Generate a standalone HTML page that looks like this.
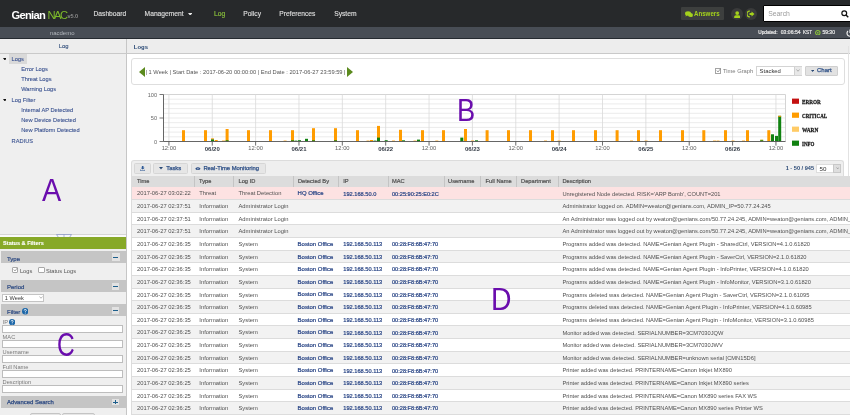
<!DOCTYPE html>
<html><head><meta charset="utf-8"><style>
html,body{margin:0;padding:0;}
body{width:850px;height:415px;overflow:hidden;position:relative;background:#fff;font-family:'Liberation Sans', sans-serif;}
.t{position:absolute;white-space:nowrap;line-height:1;}
.r{position:absolute;}

</style></head><body>
<div id="wrap" style="position:absolute;left:0;top:0;width:850px;height:415px;overflow:hidden;will-change:transform;background:#fff">
<div class="r" style="left:0.00px;top:0.00px;width:850.00px;height:26.50px;background:#27292b;"></div>
<div class="t" style="left:11.60px;top:9.82px;font-size:11.2px;color:#fff;font-weight:bold;letter-spacing:-0.75px">Genian</div>
<div class="t" style="left:47.60px;top:9.82px;font-size:11.2px;color:#7dbb2a;font-weight:normal;letter-spacing:-1.6px">NAC</div>
<div class="t" style="left:67.60px;top:13.86px;font-size:5.6px;color:#8a8a8a;font-weight:bold;letter-spacing:-0.1px">v5.0</div>
<div class="t" style="left:93.50px;top:11.33px;font-size:6.7px;color:#dcdcdc;font-weight:normal;-webkit-text-stroke:0.15px #dcdcdc">Dashboard</div>
<div class="t" style="left:144.60px;top:11.33px;font-size:6.7px;color:#dcdcdc;font-weight:normal;-webkit-text-stroke:0.15px #dcdcdc">Management</div>
<div class="t" style="left:214.00px;top:11.33px;font-size:6.7px;color:#8cc43c;font-weight:normal;-webkit-text-stroke:0.15px #8cc43c">Log</div>
<div class="t" style="left:243.20px;top:11.33px;font-size:6.7px;color:#dcdcdc;font-weight:normal;-webkit-text-stroke:0.15px #dcdcdc">Policy</div>
<div class="t" style="left:279.30px;top:11.33px;font-size:6.7px;color:#dcdcdc;font-weight:normal;-webkit-text-stroke:0.15px #dcdcdc">Preferences</div>
<div class="t" style="left:334.20px;top:11.33px;font-size:6.7px;color:#dcdcdc;font-weight:normal;-webkit-text-stroke:0.15px #dcdcdc">System</div>
<svg class="r" style="left:188.1px;top:12.7px" width="4.4" height="2.8" viewBox="0 0 8 5"><path d="M0 0 H8 L4 5 Z" fill="#e8e8e8"/></svg>
<div class="r" style="left:681.10px;top:6.80px;width:42.80px;height:13.20px;background:#3d3f3e;border-radius:1px"></div>
<svg class="r" style="left:685px;top:10.5px" width="8" height="6.5" viewBox="0 0 16 13"><ellipse cx="6" cy="5" rx="6" ry="4.5" fill="#a4d21c"/><path d="M2 8 L1 11 L5 9 Z" fill="#a4d21c"/><ellipse cx="11" cy="8" rx="5" ry="3.8" fill="#a4d21c"/><path d="M14 10 L15.5 13 L11.5 11.5 Z" fill="#a4d21c"/></svg>
<div class="t" style="left:693.50px;top:9.97px;font-size:7.6px;color:#a4d21c;font-weight:bold;transform:scaleX(0.81);transform-origin:0 0">Answers</div>
<div class="r" style="left:731.10px;top:7.80px;width:12.00px;height:12.20px;background:#3a3b3b;border-radius:50%"></div>
<svg class="r" style="left:733.8px;top:10.8px" width="6.4" height="7.2" viewBox="0 0 14 16"><circle cx="7" cy="4.6" r="4.2" fill="#a4d21c"/><path d="M0.3 16 V13 Q0.3 9.2 4 9.2 H10 Q13.7 9.2 13.7 13 V16 Z" fill="#a4d21c"/></svg>
<div class="r" style="left:745.10px;top:7.80px;width:12.00px;height:12.20px;background:#3a3b3b;border-radius:50%"></div>
<svg class="r" style="left:747.3px;top:9.8px" width="8" height="8" viewBox="0 0 16 16"><path d="M6 2 A6 6 0 1 0 6 14" stroke="#a4d21c" stroke-width="2.2" fill="none"/><path d="M5 6 H9 V3 L15 8 L9 13 V10 H5 Z" fill="#a4d21c"/></svg>
<div class="r" style="left:762.60px;top:4.50px;width:92.00px;height:17.80px;background:#fff;border:1.1px solid #000;border-radius:1px;box-sizing:border-box"></div>
<div class="t" style="left:768.20px;top:10.70px;font-size:6.85px;color:#9a9a9a;font-weight:normal;">Search</div>
<svg class="r" style="left:841px;top:9.5px" width="8" height="8" viewBox="0 0 16 16"><circle cx="6.5" cy="6.5" r="4.8" stroke="#111" stroke-width="2.4" fill="none"/><path d="M10 10 L14.5 14.5" stroke="#111" stroke-width="2.8"/></svg>
<div class="r" style="left:0.00px;top:26.50px;width:850.00px;height:11.50px;background:#484d55;"></div>
<div class="r" style="left:0.00px;top:37.50px;width:850.00px;height:1.00px;background:#252a30;"></div>
<div class="t" style="left:49.80px;top:29.72px;font-size:6.0px;color:#b3b8bd;font-weight:normal;">nacdemo</div>
<div class="t" style="left:758.20px;top:30.65px;font-size:4.78px;color:#e4e4e4;font-weight:normal;-webkit-text-stroke:0.22px #e4e4e4">Updated:</div>
<div class="t" style="left:780.80px;top:30.39px;font-size:5.09px;color:#e4e4e4;font-weight:normal;-webkit-text-stroke:0.22px #e4e4e4">03:06:54</div>
<div class="t" style="left:803.00px;top:30.81px;font-size:4.6px;color:#e4e4e4;font-weight:normal;-webkit-text-stroke:0.22px #e4e4e4">KST</div>
<svg class="r" style="left:815px;top:29.5px" width="5.6" height="5.6" viewBox="0 0 10 10"><circle cx="5" cy="5" r="4" stroke="#8cc43c" stroke-width="1.8" fill="none"/><circle cx="5" cy="5" r="1.5" fill="#8cc43c"/></svg>
<div class="t" style="left:822.40px;top:30.44px;font-size:5.03px;color:#e4e4e4;font-weight:normal;-webkit-text-stroke:0.22px #e4e4e4">59:30</div>
<svg class="r" style="left:845.5px;top:28.8px" width="8" height="8" viewBox="0 0 16 16"><path d="M4 4 A6 6 0 1 0 12 4" stroke="#f0f0f0" stroke-width="2.4" fill="none"/><path d="M8 1 V8" stroke="#f0f0f0" stroke-width="2.4"/></svg>
<div class="r" style="left:0.00px;top:38.50px;width:126.00px;height:376.50px;background:#efefef;"></div>
<div class="r" style="left:126.00px;top:38.50px;width:1.00px;height:376.50px;background:#c6c6c6;"></div>
<div class="r" style="left:0.00px;top:38.50px;width:126.00px;height:14.50px;background:#ededed;"></div>
<div class="r" style="left:0.00px;top:53.40px;width:850.00px;height:1.00px;background:#c9c9c9;"></div>
<div class="t" style="left:58.80px;top:43.91px;font-size:5.9px;color:#2c4a78;font-weight:normal;-webkit-text-stroke:0.08px #2c4a78">Log</div>
<div class="r" style="left:127.00px;top:38.50px;width:723.00px;height:14.50px;background:#ededed;"></div>
<div class="t" style="left:133.80px;top:45.07px;font-size:5.94px;color:#2b4a76;font-weight:bold;">Logs</div>
<div class="r" style="left:9.40px;top:54.00px;width:17.30px;height:9.70px;background:#d9d9d9;"></div>
<div class="t" style="left:11.60px;top:56.67px;font-size:5.7px;color:#3a5290;font-weight:normal;-webkit-text-stroke:0.1px #3a5290">Logs</div>
<svg class="r" style="left:2.6px;top:57.90px" width="3.8" height="2.6" viewBox="0 0 8 5.5"><path d="M0 0 H8 L4 5.5 Z" fill="#111"/></svg>
<div class="t" style="left:21.20px;top:66.77px;font-size:5.7px;color:#3a5290;font-weight:normal;-webkit-text-stroke:0.1px #3a5290">Error Logs</div>
<div class="t" style="left:21.20px;top:77.17px;font-size:5.7px;color:#3a5290;font-weight:normal;-webkit-text-stroke:0.1px #3a5290">Threat Logs</div>
<div class="t" style="left:21.20px;top:87.27px;font-size:5.7px;color:#3a5290;font-weight:normal;-webkit-text-stroke:0.1px #3a5290">Warning Logs</div>
<div class="t" style="left:11.60px;top:97.57px;font-size:5.7px;color:#3a5290;font-weight:normal;-webkit-text-stroke:0.1px #3a5290">Log Filter</div>
<svg class="r" style="left:2.6px;top:98.90px" width="3.8" height="2.6" viewBox="0 0 8 5.5"><path d="M0 0 H8 L4 5.5 Z" fill="#111"/></svg>
<div class="t" style="left:21.20px;top:107.67px;font-size:5.7px;color:#3a5290;font-weight:normal;-webkit-text-stroke:0.1px #3a5290">Internal AP Detected</div>
<div class="t" style="left:21.20px;top:118.07px;font-size:5.7px;color:#3a5290;font-weight:normal;-webkit-text-stroke:0.1px #3a5290">New Device Detected</div>
<div class="t" style="left:21.20px;top:128.17px;font-size:5.7px;color:#3a5290;font-weight:normal;-webkit-text-stroke:0.1px #3a5290">New Platform Detected</div>
<div class="t" style="left:11.60px;top:138.77px;font-size:5.7px;color:#3a5290;font-weight:normal;-webkit-text-stroke:0.1px #3a5290">RADIUS</div>
<div class="t" style="left:42.20px;top:175.30px;font-size:31px;color:#6a0dad;transform:scaleX(0.93);transform-origin:0 0">A</div>
<div class="r" style="left:0.00px;top:233.50px;width:126.00px;height:1.00px;background:#d6d6d6;"></div>
<div class="r" style="left:0.00px;top:234.50px;width:126.00px;height:2.80px;background:#fafafa;"></div>
<svg class="r" style="left:55.5px;top:233.6px" width="16" height="4" viewBox="0 0 16 4"><path d="M0.5 0.5 H15.5 L13.5 3.5 H2.5 Z" fill="#f6f7fb" stroke="#8e9ac4" stroke-width="0.8"/><path d="M8 0.5 V3.5" stroke="#8e9ac4" stroke-width="0.7"/></svg>
<div class="r" style="left:0.00px;top:237.30px;width:126.00px;height:12.20px;background:#87a928;"></div>
<div class="t" style="left:3.10px;top:241.20px;font-size:5.55px;color:#fff;font-weight:bold;-webkit-text-stroke:0.1px #fff">Status &amp; Filters</div>
<div class="r" style="left:1.20px;top:251.00px;width:124.80px;height:12.00px;background:#c5c5c5;"></div>
<div class="t" style="left:7.00px;top:255.52px;font-size:6.0px;color:#2d4a82;font-weight:normal;-webkit-text-stroke:0.2px #2d4a82">Type</div>
<div class="r" style="left:111.60px;top:253.30px;width:8.00px;height:8.00px;background:#e2e2e2;"></div>
<div class="r" style="left:113.30px;top:257.00px;width:4.60px;height:1.10px;background:#1d5f8c;"></div>
<div class="r" style="left:12.10px;top:266.80px;width:6.20px;height:6.40px;background:#fff;border:0.8px solid #a8a8a8;border-radius:1px;box-sizing:border-box"></div>
<svg class="r" style="left:12.7px;top:267.2px" width="5" height="5" viewBox="0 0 10 10"><path d="M1.5 5 L4 8 L9 1.5" stroke="#707070" stroke-width="1.2" fill="none"/></svg>
<div class="t" style="left:19.90px;top:268.57px;font-size:5.7px;color:#555;font-weight:normal;">Logs</div>
<div class="r" style="left:38.40px;top:266.80px;width:6.20px;height:6.40px;background:#fff;border:0.8px solid #a8a8a8;border-radius:1px;box-sizing:border-box"></div>
<div class="t" style="left:46.00px;top:268.57px;font-size:5.7px;color:#555;font-weight:normal;">Status Logs</div>
<div class="r" style="left:1.20px;top:280.40px;width:124.80px;height:11.50px;background:#c5c5c5;"></div>
<div class="t" style="left:7.00px;top:284.32px;font-size:6.0px;color:#2d4a82;font-weight:normal;-webkit-text-stroke:0.2px #2d4a82">Period</div>
<div class="r" style="left:111.80px;top:282.90px;width:7.20px;height:7.00px;background:#e2e2e2;"></div>
<div class="r" style="left:113.20px;top:286.00px;width:4.60px;height:1.10px;background:#1d5f8c;"></div>
<div class="r" style="left:2.10px;top:294.00px;width:41.90px;height:7.60px;background:#fff;border:0.7px solid #c4c4c4;box-sizing:border-box"></div>
<div class="t" style="left:4.80px;top:295.50px;font-size:5.67px;color:#333;font-weight:normal;">1 Week</div>
<svg class="r" style="left:38.5px;top:296px" width="4" height="3" viewBox="0 0 8 6"><path d="M1 1 L4 4.5 L7 1" stroke="#777" stroke-width="1" fill="none"/></svg>
<div class="r" style="left:1.20px;top:304.30px;width:124.80px;height:12.00px;background:#c5c5c5;"></div>
<div class="t" style="left:7.00px;top:308.52px;font-size:6.0px;color:#2d4a82;font-weight:normal;-webkit-text-stroke:0.2px #2d4a82">Filter</div>
<svg class="r" style="left:21.6px;top:308.2px" width="6.5" height="6.5" viewBox="0 0 12 12"><circle cx="6" cy="6" r="6" fill="#1b66a8"/><path d="M4 4.6 Q4 2.6 6 2.6 Q8 2.6 8 4.4 Q8 5.5 6.8 6 Q6 6.4 6 7.4" stroke="#fff" stroke-width="1.6" fill="none"/><circle cx="6" cy="9.3" r="0.95" fill="#fff"/></svg>
<div class="r" style="left:111.80px;top:307.20px;width:7.20px;height:7.00px;background:#e2e2e2;"></div>
<div class="r" style="left:113.20px;top:310.30px;width:4.60px;height:1.10px;background:#1d5f8c;"></div>
<div class="t" style="left:2.60px;top:319.57px;font-size:5.7px;color:#7a7a7a;font-weight:normal;">IP</div>
<div class="r" style="left:2.20px;top:325.30px;width:120.60px;height:7.80px;background:#fff;border:0.8px solid #bdbdbd;box-sizing:border-box"></div>
<div class="t" style="left:2.60px;top:334.57px;font-size:5.7px;color:#7a7a7a;font-weight:normal;">MAC</div>
<div class="r" style="left:2.20px;top:340.30px;width:120.60px;height:7.80px;background:#fff;border:0.8px solid #bdbdbd;box-sizing:border-box"></div>
<div class="t" style="left:2.60px;top:349.57px;font-size:5.7px;color:#7a7a7a;font-weight:normal;">Username</div>
<div class="r" style="left:2.20px;top:355.30px;width:120.60px;height:7.80px;background:#fff;border:0.8px solid #bdbdbd;box-sizing:border-box"></div>
<div class="t" style="left:2.60px;top:364.57px;font-size:5.7px;color:#7a7a7a;font-weight:normal;">Full Name</div>
<div class="r" style="left:2.20px;top:370.30px;width:120.60px;height:7.80px;background:#fff;border:0.8px solid #bdbdbd;box-sizing:border-box"></div>
<div class="t" style="left:2.60px;top:379.57px;font-size:5.7px;color:#7a7a7a;font-weight:normal;">Description</div>
<div class="r" style="left:2.20px;top:385.30px;width:120.60px;height:7.80px;background:#fff;border:0.8px solid #bdbdbd;box-sizing:border-box"></div>
<svg class="r" style="left:9.0px;top:318.7px" width="6.3" height="6.3" viewBox="0 0 12 12"><circle cx="6" cy="6" r="6" fill="#1b66a8"/><path d="M4 4.6 Q4 2.6 6 2.6 Q8 2.6 8 4.4 Q8 5.5 6.8 6 Q6 6.4 6 7.4" stroke="#fff" stroke-width="1.6" fill="none"/><circle cx="6" cy="9.3" r="0.95" fill="#fff"/></svg>
<div class="t" style="left:57.20px;top:329.30px;font-size:32.3px;color:#6a0dad;transform:scaleX(0.76);transform-origin:0 0">C</div>
<div class="r" style="left:1.20px;top:395.60px;width:124.80px;height:12.10px;background:#c5c5c5;"></div>
<div class="t" style="left:6.90px;top:400.07px;font-size:5.94px;color:#2d4a82;font-weight:normal;-webkit-text-stroke:0.25px #2d4a82">Advanced Search</div>
<div class="r" style="left:111.80px;top:398.70px;width:7.40px;height:6.80px;background:#e2e2e2;"></div>
<div class="r" style="left:113.30px;top:401.60px;width:4.60px;height:1.10px;background:#1d5f8c;"></div>
<div class="r" style="left:115.05px;top:399.80px;width:1.10px;height:4.60px;background:#1d5f8c;"></div>
<div class="r" style="left:29.80px;top:412.60px;width:31.60px;height:6.00px;background:#e6e6e6;border:0.7px solid #c4c4c4;border-radius:2px;box-sizing:border-box"></div>
<div class="r" style="left:62.30px;top:412.60px;width:33.10px;height:6.00px;background:#e6e6e6;border:0.7px solid #c4c4c4;border-radius:2px;box-sizing:border-box"></div>
<div class="r" style="left:131.20px;top:58.40px;width:713.60px;height:26.80px;background:#fff;border:0.8px solid #dedede;border-radius:3px;box-sizing:border-box"></div>
<svg class="r" style="left:139px;top:66.6px" width="6" height="10" viewBox="0 0 6 10"><path d="M6 0 L0 5 L6 10 Z" fill="#5b8a1e"/></svg>
<div class="t" style="left:145.50px;top:70.16px;font-size:5.72px;color:#555;font-weight:normal;">| 1 Week | Start Date : 2017-06-20 00:00:00 | End Date : 2017-06-27 23:59:59 |</div>
<svg class="r" style="left:346.7px;top:66.6px" width="6" height="10" viewBox="0 0 6 10"><path d="M0 0 L6 5 L0 10 Z" fill="#5b8a1e"/></svg>
<div class="r" style="left:715.20px;top:67.90px;width:5.80px;height:5.90px;background:#fff;border:0.8px solid #a4a4a4;box-sizing:border-box"></div>
<svg class="r" style="left:715.7px;top:68.2px" width="5" height="5" viewBox="0 0 10 10"><path d="M1.5 5 L4 8 L9 1.5" stroke="#666" stroke-width="1.2" fill="none"/></svg>
<div class="t" style="left:722.90px;top:69.09px;font-size:5.8px;color:#7a7a7a;font-weight:normal;">Time Graph</div>
<div class="r" style="left:756.40px;top:65.80px;width:46.10px;height:9.80px;background:#fff;border:0.7px solid #d4d4d4;box-sizing:border-box"></div>
<div class="r" style="left:794.40px;top:66.50px;width:7.60px;height:8.40px;background:#e8e8e8;border-left:0.7px solid #d0d0d0;box-sizing:border-box"></div>
<div class="t" style="left:759.60px;top:68.81px;font-size:5.9px;color:#333;font-weight:normal;">Stacked</div>
<svg class="r" style="left:796.2px;top:69.3px" width="4" height="3" viewBox="0 0 8 6"><path d="M1 1 L4 4.5 L7 1" stroke="#777" stroke-width="1" fill="none"/></svg>
<div class="r" style="left:805.30px;top:65.60px;width:32.50px;height:10.10px;background:#e2e2e2;border:0.8px solid #cfcfcf;border-radius:1px;box-sizing:border-box"></div>
<svg class="r" style="left:810.6px;top:69.6px" width="3.2" height="2.4" viewBox="0 0 8 6"><path d="M0 0 H8 L4 5 Z" fill="#2b4a76"/></svg>
<div class="t" style="left:817.00px;top:68.25px;font-size:5.97px;color:#2d4f86;font-weight:normal;-webkit-text-stroke:0.25px #2d4f86">Chart</div>
<svg class="r" style="left:0;top:0" width="850" height="170" viewBox="0 0 850 170"><line x1="163.5" y1="136.80" x2="785.5" y2="136.80" stroke="#e6e6e6" stroke-width="0.8"/><line x1="163.5" y1="132.10" x2="785.5" y2="132.10" stroke="#e6e6e6" stroke-width="0.8"/><line x1="163.5" y1="127.40" x2="785.5" y2="127.40" stroke="#e6e6e6" stroke-width="0.8"/><line x1="163.5" y1="122.70" x2="785.5" y2="122.70" stroke="#e6e6e6" stroke-width="0.8"/><line x1="163.5" y1="118.00" x2="785.5" y2="118.00" stroke="#e6e6e6" stroke-width="0.8"/><line x1="163.5" y1="113.30" x2="785.5" y2="113.30" stroke="#e6e6e6" stroke-width="0.8"/><line x1="163.5" y1="108.60" x2="785.5" y2="108.60" stroke="#e6e6e6" stroke-width="0.8"/><line x1="163.5" y1="103.90" x2="785.5" y2="103.90" stroke="#e6e6e6" stroke-width="0.8"/><line x1="163.5" y1="99.20" x2="785.5" y2="99.20" stroke="#e6e6e6" stroke-width="0.8"/><line x1="163.5" y1="94.5" x2="785.5" y2="94.5" stroke="#cfcfcf" stroke-width="0.9"/><line x1="168.90" y1="94.5" x2="168.90" y2="146.0" stroke="#d9d9d9" stroke-width="0.8"/><line x1="168.90" y1="141.5" x2="168.90" y2="145.5" stroke="#555" stroke-width="0.8"/><text x="168.90" y="150.40" font-size="5.8" font-family="Liberation Sans" font-weight="normal" fill="#5e5e5e" text-anchor="middle">12:00</text><line x1="212.26" y1="94.5" x2="212.26" y2="146.0" stroke="#d9d9d9" stroke-width="0.8"/><line x1="212.26" y1="141.5" x2="212.26" y2="145.5" stroke="#555" stroke-width="0.8"/><text x="212.26" y="150.60" font-size="6.0" font-family="Liberation Sans" font-weight="bold" fill="#353c46" text-anchor="middle">06/20</text><line x1="255.62" y1="94.5" x2="255.62" y2="146.0" stroke="#d9d9d9" stroke-width="0.8"/><line x1="255.62" y1="141.5" x2="255.62" y2="145.5" stroke="#555" stroke-width="0.8"/><text x="255.62" y="150.40" font-size="5.8" font-family="Liberation Sans" font-weight="normal" fill="#5e5e5e" text-anchor="middle">12:00</text><line x1="298.98" y1="94.5" x2="298.98" y2="146.0" stroke="#d9d9d9" stroke-width="0.8"/><line x1="298.98" y1="141.5" x2="298.98" y2="145.5" stroke="#555" stroke-width="0.8"/><text x="298.98" y="150.60" font-size="6.0" font-family="Liberation Sans" font-weight="bold" fill="#353c46" text-anchor="middle">06/21</text><line x1="342.34" y1="94.5" x2="342.34" y2="146.0" stroke="#d9d9d9" stroke-width="0.8"/><line x1="342.34" y1="141.5" x2="342.34" y2="145.5" stroke="#555" stroke-width="0.8"/><text x="342.34" y="150.40" font-size="5.8" font-family="Liberation Sans" font-weight="normal" fill="#5e5e5e" text-anchor="middle">12:00</text><line x1="385.70" y1="94.5" x2="385.70" y2="146.0" stroke="#d9d9d9" stroke-width="0.8"/><line x1="385.70" y1="141.5" x2="385.70" y2="145.5" stroke="#555" stroke-width="0.8"/><text x="385.70" y="150.60" font-size="6.0" font-family="Liberation Sans" font-weight="bold" fill="#353c46" text-anchor="middle">06/22</text><line x1="429.06" y1="94.5" x2="429.06" y2="146.0" stroke="#d9d9d9" stroke-width="0.8"/><line x1="429.06" y1="141.5" x2="429.06" y2="145.5" stroke="#555" stroke-width="0.8"/><text x="429.06" y="150.40" font-size="5.8" font-family="Liberation Sans" font-weight="normal" fill="#5e5e5e" text-anchor="middle">12:00</text><line x1="472.42" y1="94.5" x2="472.42" y2="146.0" stroke="#d9d9d9" stroke-width="0.8"/><line x1="472.42" y1="141.5" x2="472.42" y2="145.5" stroke="#555" stroke-width="0.8"/><text x="472.42" y="150.60" font-size="6.0" font-family="Liberation Sans" font-weight="bold" fill="#353c46" text-anchor="middle">06/23</text><line x1="515.78" y1="94.5" x2="515.78" y2="146.0" stroke="#d9d9d9" stroke-width="0.8"/><line x1="515.78" y1="141.5" x2="515.78" y2="145.5" stroke="#555" stroke-width="0.8"/><text x="515.78" y="150.40" font-size="5.8" font-family="Liberation Sans" font-weight="normal" fill="#5e5e5e" text-anchor="middle">12:00</text><line x1="559.14" y1="94.5" x2="559.14" y2="146.0" stroke="#d9d9d9" stroke-width="0.8"/><line x1="559.14" y1="141.5" x2="559.14" y2="145.5" stroke="#555" stroke-width="0.8"/><text x="559.14" y="150.60" font-size="6.0" font-family="Liberation Sans" font-weight="bold" fill="#353c46" text-anchor="middle">06/24</text><line x1="602.50" y1="94.5" x2="602.50" y2="146.0" stroke="#d9d9d9" stroke-width="0.8"/><line x1="602.50" y1="141.5" x2="602.50" y2="145.5" stroke="#555" stroke-width="0.8"/><text x="602.50" y="150.40" font-size="5.8" font-family="Liberation Sans" font-weight="normal" fill="#5e5e5e" text-anchor="middle">12:00</text><line x1="645.86" y1="94.5" x2="645.86" y2="146.0" stroke="#d9d9d9" stroke-width="0.8"/><line x1="645.86" y1="141.5" x2="645.86" y2="145.5" stroke="#555" stroke-width="0.8"/><text x="645.86" y="150.60" font-size="6.0" font-family="Liberation Sans" font-weight="bold" fill="#353c46" text-anchor="middle">06/25</text><line x1="689.22" y1="94.5" x2="689.22" y2="146.0" stroke="#d9d9d9" stroke-width="0.8"/><line x1="689.22" y1="141.5" x2="689.22" y2="145.5" stroke="#555" stroke-width="0.8"/><text x="689.22" y="150.40" font-size="5.8" font-family="Liberation Sans" font-weight="normal" fill="#5e5e5e" text-anchor="middle">12:00</text><line x1="732.58" y1="94.5" x2="732.58" y2="146.0" stroke="#d9d9d9" stroke-width="0.8"/><line x1="732.58" y1="141.5" x2="732.58" y2="145.5" stroke="#555" stroke-width="0.8"/><text x="732.58" y="150.60" font-size="6.0" font-family="Liberation Sans" font-weight="bold" fill="#353c46" text-anchor="middle">06/26</text><line x1="775.94" y1="94.5" x2="775.94" y2="146.0" stroke="#d9d9d9" stroke-width="0.8"/><line x1="775.94" y1="141.5" x2="775.94" y2="145.5" stroke="#555" stroke-width="0.8"/><text x="775.94" y="150.40" font-size="5.8" font-family="Liberation Sans" font-weight="normal" fill="#5e5e5e" text-anchor="middle">12:00</text><line x1="785.5" y1="94.5" x2="785.5" y2="141.5" stroke="#cfcfcf" stroke-width="0.9"/><rect x="182.00" y="130.20" width="3" height="11.30" fill="#ff9c00"/><rect x="204.00" y="130.20" width="3" height="11.30" fill="#ff9c00"/><rect x="225.60" y="129.00" width="3" height="12.50" fill="#ff9c00"/><rect x="247.00" y="130.20" width="3" height="11.30" fill="#ff9c00"/><rect x="269.00" y="130.20" width="3" height="11.30" fill="#ff9c00"/><rect x="291.00" y="130.20" width="3" height="11.30" fill="#ff9c00"/><rect x="312.00" y="128.20" width="3" height="13.30" fill="#ff9c00"/><rect x="334.00" y="128.20" width="3" height="13.30" fill="#ff9c00"/><rect x="356.00" y="130.20" width="3" height="11.30" fill="#ff9c00"/><rect x="377.00" y="125.90" width="3" height="15.60" fill="#ff9c00"/><rect x="399.00" y="129.80" width="3" height="11.70" fill="#ff9c00"/><rect x="421.00" y="130.20" width="3" height="11.30" fill="#ff9c00"/><rect x="442.00" y="130.20" width="3" height="11.30" fill="#ff9c00"/><rect x="464.00" y="129.00" width="3" height="12.50" fill="#ff9c00"/><rect x="485.60" y="130.20" width="3" height="11.30" fill="#ff9c00"/><rect x="507.00" y="130.20" width="3" height="11.30" fill="#ff9c00"/><rect x="529.00" y="130.20" width="3" height="11.30" fill="#ff9c00"/><rect x="551.00" y="130.20" width="3" height="11.30" fill="#ff9c00"/><rect x="572.00" y="130.20" width="3" height="11.30" fill="#ff9c00"/><rect x="594.00" y="130.20" width="3" height="11.30" fill="#ff9c00"/><rect x="615.60" y="130.20" width="3" height="11.30" fill="#ff9c00"/><rect x="637.00" y="130.20" width="3" height="11.30" fill="#ff9c00"/><rect x="659.00" y="130.20" width="3" height="11.30" fill="#ff9c00"/><rect x="681.00" y="130.20" width="3" height="11.30" fill="#ff9c00"/><rect x="702.30" y="130.20" width="3" height="11.30" fill="#ff9c00"/><rect x="724.00" y="130.20" width="3" height="11.30" fill="#ff9c00"/><rect x="746.00" y="130.20" width="3" height="11.30" fill="#ff9c00"/><rect x="767.30" y="130.20" width="3" height="11.30" fill="#ff9c00"/><rect x="222.00" y="140.60" width="3" height="0.90" fill="#ff9c00"/><rect x="283.60" y="140.60" width="3" height="0.90" fill="#ff9c00"/><rect x="366.50" y="140.60" width="3" height="0.90" fill="#ff9c00"/><rect x="392.00" y="140.60" width="3" height="0.90" fill="#ff9c00"/><rect x="413.50" y="140.60" width="3" height="0.90" fill="#ff9c00"/><rect x="435.30" y="140.60" width="3" height="0.90" fill="#ff9c00"/><rect x="471.00" y="140.60" width="3" height="0.90" fill="#ff9c00"/><rect x="544.00" y="140.60" width="3" height="0.90" fill="#ff9c00"/><rect x="557.60" y="140.60" width="3" height="0.90" fill="#ff9c00"/><rect x="630.00" y="140.60" width="3" height="0.90" fill="#ff9c00"/><rect x="644.60" y="140.60" width="3" height="0.90" fill="#ff9c00"/><rect x="713.00" y="140.60" width="3" height="0.90" fill="#ff9c00"/><rect x="716.50" y="140.60" width="3" height="0.90" fill="#ff9c00"/><rect x="731.50" y="140.60" width="3" height="0.90" fill="#ff9c00"/><rect x="742.00" y="140.60" width="3" height="0.90" fill="#ff9c00"/><rect x="214.70" y="140.00" width="3" height="1.50" fill="#ff9c00"/><rect x="370.00" y="140.00" width="3" height="1.50" fill="#ff9c00"/><rect x="211.00" y="139.20" width="3" height="2.30" fill="#118211"/><rect x="294.40" y="140.60" width="3" height="0.90" fill="#118211"/><rect x="298.00" y="140.20" width="3" height="1.30" fill="#118211"/><rect x="305.00" y="138.80" width="3" height="2.70" fill="#118211"/><rect x="373.50" y="140.60" width="3" height="0.90" fill="#118211"/><rect x="384.70" y="140.20" width="3" height="1.30" fill="#118211"/><rect x="402.00" y="140.30" width="3" height="1.20" fill="#118211"/><rect x="417.00" y="139.60" width="3" height="1.90" fill="#118211"/><rect x="460.30" y="137.60" width="3" height="3.90" fill="#118211"/><rect x="475.00" y="140.30" width="3" height="1.20" fill="#118211"/><rect x="760.20" y="140.00" width="3" height="1.50" fill="#118211"/><rect x="771.00" y="134.30" width="3" height="7.20" fill="#118211"/><rect x="775.00" y="135.90" width="3" height="5.60" fill="#118211"/><rect x="778.20" y="115.80" width="3" height="25.70" fill="#118211"/><rect x="225.60" y="140.30" width="3" height="1.2" fill="#118211"/><rect x="291.00" y="140.30" width="3" height="1.2" fill="#118211"/><rect x="312.00" y="140.30" width="3" height="1.2" fill="#118211"/><rect x="334.00" y="140.30" width="3" height="1.2" fill="#118211"/><rect x="377" y="137.6" width="3" height="3.90" fill="#118211"/><rect x="778.2" y="115.8" width="2.8" height="1" fill="#ff9c00"/><rect x="760.2" y="139.6" width="3" height="0.8" fill="#c8b020"/><rect x="211" y="138.4" width="3" height="0.9" fill="#ff9c00"/><line x1="163.5" y1="94.5" x2="163.5" y2="141.5" stroke="#555" stroke-width="0.9"/><line x1="163.5" y1="141.5" x2="785.5" y2="141.5" stroke="#555" stroke-width="0.9"/><line x1="159.5" y1="94.50" x2="163.5" y2="94.50" stroke="#555" stroke-width="0.8"/><text x="157.00" y="96.50" font-size="5.6" font-family="Liberation Sans" fill="#666" text-anchor="end">100</text><line x1="159.5" y1="118.00" x2="163.5" y2="118.00" stroke="#555" stroke-width="0.8"/><text x="157.00" y="120.00" font-size="5.6" font-family="Liberation Sans" fill="#666" text-anchor="end">50</text><line x1="159.5" y1="141.50" x2="163.5" y2="141.50" stroke="#555" stroke-width="0.8"/><text x="157.00" y="143.50" font-size="5.6" font-family="Liberation Sans" fill="#666" text-anchor="end">0</text><rect x="792" y="98.60" width="7" height="5.2" fill="#c41010"/><text x="802" y="103.90" font-size="6.9" font-family="Liberation Serif" font-weight="bold" fill="#1a1a1a" stroke="#1a1a1a" stroke-width="0.3" textLength="18.9" lengthAdjust="spacingAndGlyphs">ERROR</text><rect x="792" y="112.60" width="7" height="5.2" fill="#ff9c00"/><text x="802" y="117.90" font-size="6.9" font-family="Liberation Serif" font-weight="bold" fill="#1a1a1a" stroke="#1a1a1a" stroke-width="0.3" textLength="25.2" lengthAdjust="spacingAndGlyphs">CRITICAL</text><rect x="792" y="126.60" width="7" height="5.2" fill="#ffcb66"/><text x="802" y="131.90" font-size="6.9" font-family="Liberation Serif" font-weight="bold" fill="#1a1a1a" stroke="#1a1a1a" stroke-width="0.3" textLength="16.3" lengthAdjust="spacingAndGlyphs">WARN</text><rect x="792" y="140.60" width="7" height="5.2" fill="#118211"/><text x="802" y="145.90" font-size="6.9" font-family="Liberation Serif" font-weight="bold" fill="#1a1a1a" stroke="#1a1a1a" stroke-width="0.3" textLength="12.4" lengthAdjust="spacingAndGlyphs">INFO</text></svg>
<div class="t" style="left:457.30px;top:94.60px;font-size:31px;color:#6a0dad;transform:scaleX(0.88);transform-origin:0 0">B</div>
<div class="r" style="left:131.20px;top:160.30px;width:713.00px;height:16.00px;background:#efefef;border:0.8px solid #dcdcdc;border-bottom:none;border-radius:3px 3px 0 0;box-sizing:border-box"></div>
<div class="r" style="left:134.20px;top:163.10px;width:16.90px;height:10.50px;background:#e6e6e6;border:0.8px solid #d6d6d6;border-radius:1.5px;box-sizing:border-box"></div>
<div class="r" style="left:153.20px;top:163.10px;width:34.40px;height:10.50px;background:#e6e6e6;border:0.8px solid #d6d6d6;border-radius:1.5px;box-sizing:border-box"></div>
<div class="r" style="left:190.80px;top:163.10px;width:74.80px;height:10.50px;background:#e6e6e6;border:0.8px solid #d6d6d6;border-radius:1.5px;box-sizing:border-box"></div>
<svg class="r" style="left:139.8px;top:165.8px" width="5.4" height="5" viewBox="0 0 12 11"><path d="M4.2 0 H7.8 V4 H10.5 L6 8 L1.5 4 H4.2 Z" fill="#2f5a96"/><path d="M0.5 7.5 V10.5 H11.5 V7.5" stroke="#2f5a96" stroke-width="1.6" fill="none"/></svg>
<svg class="r" style="left:158.6px;top:167.0px" width="4" height="3" viewBox="0 0 8 6"><path d="M0 0 H8 L4 5 Z" fill="#2b4a76"/></svg>
<div class="t" style="left:166.20px;top:165.61px;font-size:5.9px;color:#2d4f86;font-weight:normal;-webkit-text-stroke:0.25px #2d4f86">Tasks</div>
<svg class="r" style="left:195.2px;top:166.8px" width="5.8" height="3.6" viewBox="0 0 12 8"><path d="M0 4 Q6 -2.5 12 4 Q6 10.5 0 4 Z" fill="#2d4f86"/><circle cx="6" cy="4" r="1.5" fill="#e6e6e6"/><circle cx="6" cy="4" r="0.8" fill="#2d4f86"/></svg>
<div class="t" style="left:203.40px;top:165.65px;font-size:5.85px;color:#2d4f86;font-weight:normal;-webkit-text-stroke:0.25px #2d4f86">Real-Time Monitoring</div>
<div class="t" style="left:785.70px;top:165.66px;font-size:5.6px;color:#2b4a76;font-weight:bold;">1 - 50 / 945</div>
<div class="r" style="left:815.70px;top:163.50px;width:25.00px;height:9.40px;background:#fff;border:0.6px solid #ddd;box-sizing:border-box"></div>
<div class="r" style="left:833.40px;top:163.90px;width:7.30px;height:8.80px;background:#dedede;border:0.7px solid #c8c8c8;box-sizing:border-box"></div>
<div class="t" style="left:819.60px;top:165.75px;font-size:6.2px;color:#333;font-weight:normal;">50</div>
<svg class="r" style="left:835.5px;top:167px" width="3.5" height="2.5" viewBox="0 0 8 6"><path d="M1 1 L4 4.5 L7 1" stroke="#777" stroke-width="1.2" fill="none"/></svg>
<div class="r" style="left:848.40px;top:46.00px;width:0.80px;height:130.00px;background:#e2e2e2;"></div>
<div class="r" style="left:131.90px;top:176.00px;width:719.00px;height:11.40px;background:#dcdcdc;"></div>
<div class="r" style="left:194.30px;top:176.00px;width:0.90px;height:11.30px;background:#c4c4c4;"></div>
<div class="r" style="left:233.00px;top:176.00px;width:0.90px;height:11.30px;background:#c4c4c4;"></div>
<div class="r" style="left:292.60px;top:176.00px;width:0.90px;height:11.30px;background:#c4c4c4;"></div>
<div class="r" style="left:338.00px;top:176.00px;width:0.90px;height:11.30px;background:#c4c4c4;"></div>
<div class="r" style="left:387.90px;top:176.00px;width:0.90px;height:11.30px;background:#c4c4c4;"></div>
<div class="r" style="left:443.60px;top:176.00px;width:0.90px;height:11.30px;background:#c4c4c4;"></div>
<div class="r" style="left:480.40px;top:176.00px;width:0.90px;height:11.30px;background:#c4c4c4;"></div>
<div class="r" style="left:516.40px;top:176.00px;width:0.90px;height:11.30px;background:#c4c4c4;"></div>
<div class="r" style="left:558.00px;top:176.00px;width:0.90px;height:11.30px;background:#c4c4c4;"></div>
<div class="t" style="left:137.00px;top:179.35px;font-size:5.73px;color:#505050;font-weight:normal;-webkit-text-stroke:0.2px #505050">Time</div>
<div class="t" style="left:199.00px;top:179.35px;font-size:5.73px;color:#505050;font-weight:normal;-webkit-text-stroke:0.2px #505050">Type</div>
<div class="t" style="left:238.50px;top:179.35px;font-size:5.73px;color:#505050;font-weight:normal;-webkit-text-stroke:0.2px #505050">Log ID</div>
<div class="t" style="left:297.90px;top:179.35px;font-size:5.73px;color:#505050;font-weight:normal;-webkit-text-stroke:0.2px #505050">Detected By</div>
<div class="t" style="left:343.20px;top:179.35px;font-size:5.73px;color:#505050;font-weight:normal;-webkit-text-stroke:0.2px #505050">IP</div>
<div class="t" style="left:392.00px;top:179.35px;font-size:5.73px;color:#505050;font-weight:normal;-webkit-text-stroke:0.2px #505050">MAC</div>
<div class="t" style="left:448.00px;top:179.35px;font-size:5.73px;color:#505050;font-weight:normal;-webkit-text-stroke:0.2px #505050">Username</div>
<div class="t" style="left:485.60px;top:179.35px;font-size:5.73px;color:#505050;font-weight:normal;-webkit-text-stroke:0.2px #505050">Full Name</div>
<div class="t" style="left:521.00px;top:179.35px;font-size:5.73px;color:#505050;font-weight:normal;-webkit-text-stroke:0.2px #505050">Department</div>
<div class="t" style="left:562.40px;top:179.35px;font-size:5.73px;color:#505050;font-weight:normal;-webkit-text-stroke:0.2px #505050">Description</div>
<div class="r" style="left:131.90px;top:186.86px;width:719.00px;height:12.64px;background:#fde2e2;"></div>
<div class="r" style="left:131.90px;top:199.50px;width:719.00px;height:12.64px;background:#f2f2f2;"></div>
<div class="r" style="left:131.90px;top:212.14px;width:719.00px;height:12.64px;background:#ffffff;"></div>
<div class="r" style="left:131.90px;top:224.78px;width:719.00px;height:12.64px;background:#f2f2f2;"></div>
<div class="r" style="left:131.90px;top:237.42px;width:719.00px;height:12.64px;background:#ffffff;"></div>
<div class="r" style="left:131.90px;top:250.06px;width:719.00px;height:12.64px;background:#f2f2f2;"></div>
<div class="r" style="left:131.90px;top:262.70px;width:719.00px;height:12.64px;background:#ffffff;"></div>
<div class="r" style="left:131.90px;top:275.34px;width:719.00px;height:12.64px;background:#f2f2f2;"></div>
<div class="r" style="left:131.90px;top:287.98px;width:719.00px;height:12.64px;background:#ffffff;"></div>
<div class="r" style="left:131.90px;top:300.62px;width:719.00px;height:12.64px;background:#f2f2f2;"></div>
<div class="r" style="left:131.90px;top:313.26px;width:719.00px;height:12.64px;background:#ffffff;"></div>
<div class="r" style="left:131.90px;top:325.90px;width:719.00px;height:12.64px;background:#f2f2f2;"></div>
<div class="r" style="left:131.90px;top:338.54px;width:719.00px;height:12.64px;background:#ffffff;"></div>
<div class="r" style="left:131.90px;top:351.18px;width:719.00px;height:12.64px;background:#f2f2f2;"></div>
<div class="r" style="left:131.90px;top:363.82px;width:719.00px;height:12.64px;background:#ffffff;"></div>
<div class="r" style="left:131.90px;top:376.46px;width:719.00px;height:12.64px;background:#f2f2f2;"></div>
<div class="r" style="left:131.90px;top:389.10px;width:719.00px;height:12.64px;background:#ffffff;"></div>
<div class="r" style="left:131.90px;top:401.74px;width:719.00px;height:12.64px;background:#f2f2f2;"></div>
<div class="r" style="left:131.90px;top:199.05px;width:719.00px;height:0.90px;background:#dcdcdc;"></div>
<div class="r" style="left:131.90px;top:211.69px;width:719.00px;height:0.90px;background:#dcdcdc;"></div>
<div class="r" style="left:131.90px;top:224.33px;width:719.00px;height:0.90px;background:#dcdcdc;"></div>
<div class="r" style="left:131.90px;top:236.97px;width:719.00px;height:0.90px;background:#dcdcdc;"></div>
<div class="r" style="left:131.90px;top:249.61px;width:719.00px;height:0.90px;background:#dcdcdc;"></div>
<div class="r" style="left:131.90px;top:262.25px;width:719.00px;height:0.90px;background:#dcdcdc;"></div>
<div class="r" style="left:131.90px;top:274.89px;width:719.00px;height:0.90px;background:#dcdcdc;"></div>
<div class="r" style="left:131.90px;top:287.53px;width:719.00px;height:0.90px;background:#dcdcdc;"></div>
<div class="r" style="left:131.90px;top:300.17px;width:719.00px;height:0.90px;background:#dcdcdc;"></div>
<div class="r" style="left:131.90px;top:312.81px;width:719.00px;height:0.90px;background:#dcdcdc;"></div>
<div class="r" style="left:131.90px;top:325.45px;width:719.00px;height:0.90px;background:#dcdcdc;"></div>
<div class="r" style="left:131.90px;top:338.09px;width:719.00px;height:0.90px;background:#dcdcdc;"></div>
<div class="r" style="left:131.90px;top:350.73px;width:719.00px;height:0.90px;background:#dcdcdc;"></div>
<div class="r" style="left:131.90px;top:363.37px;width:719.00px;height:0.90px;background:#dcdcdc;"></div>
<div class="r" style="left:131.90px;top:376.01px;width:719.00px;height:0.90px;background:#dcdcdc;"></div>
<div class="r" style="left:131.90px;top:388.65px;width:719.00px;height:0.90px;background:#dcdcdc;"></div>
<div class="r" style="left:131.90px;top:401.29px;width:719.00px;height:0.90px;background:#dcdcdc;"></div>
<div class="r" style="left:131.90px;top:413.93px;width:719.00px;height:0.90px;background:#dcdcdc;"></div>
<div class="t" style="left:137.00px;top:191.45px;font-size:5.8px;color:#505050;font-weight:normal;">2017-06-27 03:02:22</div>
<div class="t" style="left:199.30px;top:191.45px;font-size:5.8px;color:#505050;font-weight:normal;">Threat</div>
<div class="t" style="left:238.50px;top:191.45px;font-size:5.8px;color:#505050;font-weight:normal;">Threat Detection</div>
<div class="t" style="left:297.60px;top:191.31px;font-size:5.96px;color:#2a4686;font-weight:normal;-webkit-text-stroke:0.22px #2a4686">HQ Office</div>
<div class="t" style="left:343.30px;top:191.56px;font-size:5.67px;color:#2a4686;font-weight:normal;-webkit-text-stroke:0.22px #2a4686">192.168.50.0</div>
<div class="t" style="left:392.00px;top:191.60px;font-size:5.62px;color:#2a4686;font-weight:normal;-webkit-text-stroke:0.22px #2a4686">00:25:90:25:E0:2C</div>
<div class="t" style="left:562.40px;top:191.51px;font-size:5.73px;color:#505050;font-weight:normal;">Unregistered Node detected. RISK=&#39;ARP Bomb&#39;, COUNT=201</div>
<div class="t" style="left:137.00px;top:204.09px;font-size:5.8px;color:#505050;font-weight:normal;">2017-06-27 02:37:51</div>
<div class="t" style="left:199.30px;top:204.09px;font-size:5.8px;color:#505050;font-weight:normal;">Information</div>
<div class="t" style="left:238.50px;top:204.09px;font-size:5.8px;color:#505050;font-weight:normal;">Administrator Login</div>
<div class="t" style="left:562.40px;top:204.15px;font-size:5.73px;color:#505050;font-weight:normal;">Administrator logged on. ADMIN=weaton@genians.com, ADMIN_IP=50.77.24.245</div>
<div class="t" style="left:137.00px;top:216.73px;font-size:5.8px;color:#505050;font-weight:normal;">2017-06-27 02:37:51</div>
<div class="t" style="left:199.30px;top:216.73px;font-size:5.8px;color:#505050;font-weight:normal;">Information</div>
<div class="t" style="left:238.50px;top:216.73px;font-size:5.8px;color:#505050;font-weight:normal;">Administrator Login</div>
<div class="t" style="left:562.40px;top:216.79px;font-size:5.73px;color:#505050;font-weight:normal;">An Administrator was logged out by weaton@genians.com/50.77.24.245, ADMIN=weaton@genians.com, ADMIN_IP=50.77.24.245</div>
<div class="t" style="left:137.00px;top:229.37px;font-size:5.8px;color:#505050;font-weight:normal;">2017-06-27 02:37:51</div>
<div class="t" style="left:199.30px;top:229.37px;font-size:5.8px;color:#505050;font-weight:normal;">Information</div>
<div class="t" style="left:238.50px;top:229.37px;font-size:5.8px;color:#505050;font-weight:normal;">Administrator Login</div>
<div class="t" style="left:562.40px;top:229.43px;font-size:5.73px;color:#505050;font-weight:normal;">An Administrator was logged out by weaton@genians.com/50.77.24.245, ADMIN=weaton@genians.com, ADMIN_IP=50.77.24.245</div>
<div class="t" style="left:137.00px;top:242.01px;font-size:5.8px;color:#505050;font-weight:normal;">2017-06-27 02:36:35</div>
<div class="t" style="left:199.30px;top:242.01px;font-size:5.8px;color:#505050;font-weight:normal;">Information</div>
<div class="t" style="left:238.50px;top:242.01px;font-size:5.8px;color:#505050;font-weight:normal;">System</div>
<div class="t" style="left:297.60px;top:241.87px;font-size:5.96px;color:#2a4686;font-weight:normal;-webkit-text-stroke:0.22px #2a4686">Boston Office</div>
<div class="t" style="left:343.30px;top:242.12px;font-size:5.67px;color:#2a4686;font-weight:normal;-webkit-text-stroke:0.22px #2a4686">192.168.50.113</div>
<div class="t" style="left:392.00px;top:242.16px;font-size:5.62px;color:#2a4686;font-weight:normal;-webkit-text-stroke:0.22px #2a4686">00:28:F8:6B:47:70</div>
<div class="t" style="left:562.40px;top:242.07px;font-size:5.73px;color:#505050;font-weight:normal;">Programs added was detected. NAME=Genian Agent Plugin - SharedCtrl, VERSION=4.1.0.61820</div>
<div class="t" style="left:137.00px;top:254.65px;font-size:5.8px;color:#505050;font-weight:normal;">2017-06-27 02:36:35</div>
<div class="t" style="left:199.30px;top:254.65px;font-size:5.8px;color:#505050;font-weight:normal;">Information</div>
<div class="t" style="left:238.50px;top:254.65px;font-size:5.8px;color:#505050;font-weight:normal;">System</div>
<div class="t" style="left:297.60px;top:254.51px;font-size:5.96px;color:#2a4686;font-weight:normal;-webkit-text-stroke:0.22px #2a4686">Boston Office</div>
<div class="t" style="left:343.30px;top:254.76px;font-size:5.67px;color:#2a4686;font-weight:normal;-webkit-text-stroke:0.22px #2a4686">192.168.50.113</div>
<div class="t" style="left:392.00px;top:254.80px;font-size:5.62px;color:#2a4686;font-weight:normal;-webkit-text-stroke:0.22px #2a4686">00:28:F8:6B:47:70</div>
<div class="t" style="left:562.40px;top:254.71px;font-size:5.73px;color:#505050;font-weight:normal;">Programs added was detected. NAME=Genian Agent Plugin - SaverCtrl, VERSION=2.1.0.61820</div>
<div class="t" style="left:137.00px;top:267.29px;font-size:5.8px;color:#505050;font-weight:normal;">2017-06-27 02:36:35</div>
<div class="t" style="left:199.30px;top:267.29px;font-size:5.8px;color:#505050;font-weight:normal;">Information</div>
<div class="t" style="left:238.50px;top:267.29px;font-size:5.8px;color:#505050;font-weight:normal;">System</div>
<div class="t" style="left:297.60px;top:267.15px;font-size:5.96px;color:#2a4686;font-weight:normal;-webkit-text-stroke:0.22px #2a4686">Boston Office</div>
<div class="t" style="left:343.30px;top:267.40px;font-size:5.67px;color:#2a4686;font-weight:normal;-webkit-text-stroke:0.22px #2a4686">192.168.50.113</div>
<div class="t" style="left:392.00px;top:267.44px;font-size:5.62px;color:#2a4686;font-weight:normal;-webkit-text-stroke:0.22px #2a4686">00:28:F8:6B:47:70</div>
<div class="t" style="left:562.40px;top:267.35px;font-size:5.73px;color:#505050;font-weight:normal;">Programs added was detected. NAME=Genian Agent Plugin - InfoPrinter, VERSION=4.1.0.61820</div>
<div class="t" style="left:137.00px;top:279.93px;font-size:5.8px;color:#505050;font-weight:normal;">2017-06-27 02:36:35</div>
<div class="t" style="left:199.30px;top:279.93px;font-size:5.8px;color:#505050;font-weight:normal;">Information</div>
<div class="t" style="left:238.50px;top:279.93px;font-size:5.8px;color:#505050;font-weight:normal;">System</div>
<div class="t" style="left:297.60px;top:279.79px;font-size:5.96px;color:#2a4686;font-weight:normal;-webkit-text-stroke:0.22px #2a4686">Boston Office</div>
<div class="t" style="left:343.30px;top:280.04px;font-size:5.67px;color:#2a4686;font-weight:normal;-webkit-text-stroke:0.22px #2a4686">192.168.50.113</div>
<div class="t" style="left:392.00px;top:280.08px;font-size:5.62px;color:#2a4686;font-weight:normal;-webkit-text-stroke:0.22px #2a4686">00:28:F8:6B:47:70</div>
<div class="t" style="left:562.40px;top:279.99px;font-size:5.73px;color:#505050;font-weight:normal;">Programs added was detected. NAME=Genian Agent Plugin - InfoMonitor, VERSION=3.1.0.61820</div>
<div class="t" style="left:137.00px;top:292.57px;font-size:5.8px;color:#505050;font-weight:normal;">2017-06-27 02:36:35</div>
<div class="t" style="left:199.30px;top:292.57px;font-size:5.8px;color:#505050;font-weight:normal;">Information</div>
<div class="t" style="left:238.50px;top:292.57px;font-size:5.8px;color:#505050;font-weight:normal;">System</div>
<div class="t" style="left:297.60px;top:292.43px;font-size:5.96px;color:#2a4686;font-weight:normal;-webkit-text-stroke:0.22px #2a4686">Boston Office</div>
<div class="t" style="left:343.30px;top:292.68px;font-size:5.67px;color:#2a4686;font-weight:normal;-webkit-text-stroke:0.22px #2a4686">192.168.50.113</div>
<div class="t" style="left:392.00px;top:292.72px;font-size:5.62px;color:#2a4686;font-weight:normal;-webkit-text-stroke:0.22px #2a4686">00:28:F8:6B:47:70</div>
<div class="t" style="left:562.40px;top:292.63px;font-size:5.73px;color:#505050;font-weight:normal;">Programs deleted was detected. NAME=Genian Agent Plugin - SaverCtrl, VERSION=2.1.0.61095</div>
<div class="t" style="left:137.00px;top:305.21px;font-size:5.8px;color:#505050;font-weight:normal;">2017-06-27 02:36:35</div>
<div class="t" style="left:199.30px;top:305.21px;font-size:5.8px;color:#505050;font-weight:normal;">Information</div>
<div class="t" style="left:238.50px;top:305.21px;font-size:5.8px;color:#505050;font-weight:normal;">System</div>
<div class="t" style="left:297.60px;top:305.07px;font-size:5.96px;color:#2a4686;font-weight:normal;-webkit-text-stroke:0.22px #2a4686">Boston Office</div>
<div class="t" style="left:343.30px;top:305.32px;font-size:5.67px;color:#2a4686;font-weight:normal;-webkit-text-stroke:0.22px #2a4686">192.168.50.113</div>
<div class="t" style="left:392.00px;top:305.36px;font-size:5.62px;color:#2a4686;font-weight:normal;-webkit-text-stroke:0.22px #2a4686">00:28:F8:6B:47:70</div>
<div class="t" style="left:562.40px;top:305.27px;font-size:5.73px;color:#505050;font-weight:normal;">Programs deleted was detected. NAME=Genian Agent Plugin - InfoPrinter, VERSION=4.1.0.60985</div>
<div class="t" style="left:137.00px;top:317.85px;font-size:5.8px;color:#505050;font-weight:normal;">2017-06-27 02:36:35</div>
<div class="t" style="left:199.30px;top:317.85px;font-size:5.8px;color:#505050;font-weight:normal;">Information</div>
<div class="t" style="left:238.50px;top:317.85px;font-size:5.8px;color:#505050;font-weight:normal;">System</div>
<div class="t" style="left:297.60px;top:317.71px;font-size:5.96px;color:#2a4686;font-weight:normal;-webkit-text-stroke:0.22px #2a4686">Boston Office</div>
<div class="t" style="left:343.30px;top:317.96px;font-size:5.67px;color:#2a4686;font-weight:normal;-webkit-text-stroke:0.22px #2a4686">192.168.50.113</div>
<div class="t" style="left:392.00px;top:318.00px;font-size:5.62px;color:#2a4686;font-weight:normal;-webkit-text-stroke:0.22px #2a4686">00:28:F8:6B:47:70</div>
<div class="t" style="left:562.40px;top:317.91px;font-size:5.73px;color:#505050;font-weight:normal;">Programs deleted was detected. NAME=Genian Agent Plugin - InfoMonitor, VERSION=3.1.0.60985</div>
<div class="t" style="left:137.00px;top:330.49px;font-size:5.8px;color:#505050;font-weight:normal;">2017-06-27 02:36:25</div>
<div class="t" style="left:199.30px;top:330.49px;font-size:5.8px;color:#505050;font-weight:normal;">Information</div>
<div class="t" style="left:238.50px;top:330.49px;font-size:5.8px;color:#505050;font-weight:normal;">System</div>
<div class="t" style="left:297.60px;top:330.35px;font-size:5.96px;color:#2a4686;font-weight:normal;-webkit-text-stroke:0.22px #2a4686">Boston Office</div>
<div class="t" style="left:343.30px;top:330.60px;font-size:5.67px;color:#2a4686;font-weight:normal;-webkit-text-stroke:0.22px #2a4686">192.168.50.113</div>
<div class="t" style="left:392.00px;top:330.64px;font-size:5.62px;color:#2a4686;font-weight:normal;-webkit-text-stroke:0.22px #2a4686">00:28:F8:6B:47:70</div>
<div class="t" style="left:562.40px;top:330.55px;font-size:5.73px;color:#505050;font-weight:normal;">Monitor added was detected. SERIALNUMBER=3CM7030JQW</div>
<div class="t" style="left:137.00px;top:343.13px;font-size:5.8px;color:#505050;font-weight:normal;">2017-06-27 02:36:25</div>
<div class="t" style="left:199.30px;top:343.13px;font-size:5.8px;color:#505050;font-weight:normal;">Information</div>
<div class="t" style="left:238.50px;top:343.13px;font-size:5.8px;color:#505050;font-weight:normal;">System</div>
<div class="t" style="left:297.60px;top:342.99px;font-size:5.96px;color:#2a4686;font-weight:normal;-webkit-text-stroke:0.22px #2a4686">Boston Office</div>
<div class="t" style="left:343.30px;top:343.24px;font-size:5.67px;color:#2a4686;font-weight:normal;-webkit-text-stroke:0.22px #2a4686">192.168.50.113</div>
<div class="t" style="left:392.00px;top:343.28px;font-size:5.62px;color:#2a4686;font-weight:normal;-webkit-text-stroke:0.22px #2a4686">00:28:F8:6B:47:70</div>
<div class="t" style="left:562.40px;top:343.19px;font-size:5.73px;color:#505050;font-weight:normal;">Monitor added was detected. SERIALNUMBER=3CM7030JWV</div>
<div class="t" style="left:137.00px;top:355.77px;font-size:5.8px;color:#505050;font-weight:normal;">2017-06-27 02:36:25</div>
<div class="t" style="left:199.30px;top:355.77px;font-size:5.8px;color:#505050;font-weight:normal;">Information</div>
<div class="t" style="left:238.50px;top:355.77px;font-size:5.8px;color:#505050;font-weight:normal;">System</div>
<div class="t" style="left:297.60px;top:355.63px;font-size:5.96px;color:#2a4686;font-weight:normal;-webkit-text-stroke:0.22px #2a4686">Boston Office</div>
<div class="t" style="left:343.30px;top:355.88px;font-size:5.67px;color:#2a4686;font-weight:normal;-webkit-text-stroke:0.22px #2a4686">192.168.50.113</div>
<div class="t" style="left:392.00px;top:355.92px;font-size:5.62px;color:#2a4686;font-weight:normal;-webkit-text-stroke:0.22px #2a4686">00:28:F8:6B:47:70</div>
<div class="t" style="left:562.40px;top:355.83px;font-size:5.73px;color:#505050;font-weight:normal;">Monitor added was detected. SERIALNUMBER=unknown serial [CMN15D6]</div>
<div class="t" style="left:137.00px;top:368.41px;font-size:5.8px;color:#505050;font-weight:normal;">2017-06-27 02:36:25</div>
<div class="t" style="left:199.30px;top:368.41px;font-size:5.8px;color:#505050;font-weight:normal;">Information</div>
<div class="t" style="left:238.50px;top:368.41px;font-size:5.8px;color:#505050;font-weight:normal;">System</div>
<div class="t" style="left:297.60px;top:368.27px;font-size:5.96px;color:#2a4686;font-weight:normal;-webkit-text-stroke:0.22px #2a4686">Boston Office</div>
<div class="t" style="left:343.30px;top:368.52px;font-size:5.67px;color:#2a4686;font-weight:normal;-webkit-text-stroke:0.22px #2a4686">192.168.50.113</div>
<div class="t" style="left:392.00px;top:368.56px;font-size:5.62px;color:#2a4686;font-weight:normal;-webkit-text-stroke:0.22px #2a4686">00:28:F8:6B:47:70</div>
<div class="t" style="left:562.40px;top:368.47px;font-size:5.73px;color:#505050;font-weight:normal;">Printer added was detected. PRINTERNAME=Canon Inkjet MX890</div>
<div class="t" style="left:137.00px;top:381.05px;font-size:5.8px;color:#505050;font-weight:normal;">2017-06-27 02:36:25</div>
<div class="t" style="left:199.30px;top:381.05px;font-size:5.8px;color:#505050;font-weight:normal;">Information</div>
<div class="t" style="left:238.50px;top:381.05px;font-size:5.8px;color:#505050;font-weight:normal;">System</div>
<div class="t" style="left:297.60px;top:380.91px;font-size:5.96px;color:#2a4686;font-weight:normal;-webkit-text-stroke:0.22px #2a4686">Boston Office</div>
<div class="t" style="left:343.30px;top:381.16px;font-size:5.67px;color:#2a4686;font-weight:normal;-webkit-text-stroke:0.22px #2a4686">192.168.50.113</div>
<div class="t" style="left:392.00px;top:381.20px;font-size:5.62px;color:#2a4686;font-weight:normal;-webkit-text-stroke:0.22px #2a4686">00:28:F8:6B:47:70</div>
<div class="t" style="left:562.40px;top:381.11px;font-size:5.73px;color:#505050;font-weight:normal;">Printer added was detected. PRINTERNAME=Canon Inkjet MX890 series</div>
<div class="t" style="left:137.00px;top:393.69px;font-size:5.8px;color:#505050;font-weight:normal;">2017-06-27 02:36:25</div>
<div class="t" style="left:199.30px;top:393.69px;font-size:5.8px;color:#505050;font-weight:normal;">Information</div>
<div class="t" style="left:238.50px;top:393.69px;font-size:5.8px;color:#505050;font-weight:normal;">System</div>
<div class="t" style="left:297.60px;top:393.55px;font-size:5.96px;color:#2a4686;font-weight:normal;-webkit-text-stroke:0.22px #2a4686">Boston Office</div>
<div class="t" style="left:343.30px;top:393.80px;font-size:5.67px;color:#2a4686;font-weight:normal;-webkit-text-stroke:0.22px #2a4686">192.168.50.113</div>
<div class="t" style="left:392.00px;top:393.84px;font-size:5.62px;color:#2a4686;font-weight:normal;-webkit-text-stroke:0.22px #2a4686">00:28:F8:6B:47:70</div>
<div class="t" style="left:562.40px;top:393.75px;font-size:5.73px;color:#505050;font-weight:normal;">Printer added was detected. PRINTERNAME=Canon MX890 series FAX WS</div>
<div class="t" style="left:137.00px;top:406.33px;font-size:5.8px;color:#505050;font-weight:normal;">2017-06-27 02:36:25</div>
<div class="t" style="left:199.30px;top:406.33px;font-size:5.8px;color:#505050;font-weight:normal;">Information</div>
<div class="t" style="left:238.50px;top:406.33px;font-size:5.8px;color:#505050;font-weight:normal;">System</div>
<div class="t" style="left:297.60px;top:406.19px;font-size:5.96px;color:#2a4686;font-weight:normal;-webkit-text-stroke:0.22px #2a4686">Boston Office</div>
<div class="t" style="left:343.30px;top:406.44px;font-size:5.67px;color:#2a4686;font-weight:normal;-webkit-text-stroke:0.22px #2a4686">192.168.50.113</div>
<div class="t" style="left:392.00px;top:406.48px;font-size:5.62px;color:#2a4686;font-weight:normal;-webkit-text-stroke:0.22px #2a4686">00:28:F8:6B:47:70</div>
<div class="t" style="left:562.40px;top:406.39px;font-size:5.73px;color:#505050;font-weight:normal;">Printer added was detected. PRINTERNAME=Canon MX890 series Printer WS</div>
<div class="r" style="left:131.10px;top:176.00px;width:0.85px;height:239.00px;background:#dcdcdc;"></div>
<div class="t" style="left:491.40px;top:284.10px;font-size:31px;color:#6a0dad;transform:scaleX(0.915);transform-origin:0 0">D</div>
</div>
</body></html>
